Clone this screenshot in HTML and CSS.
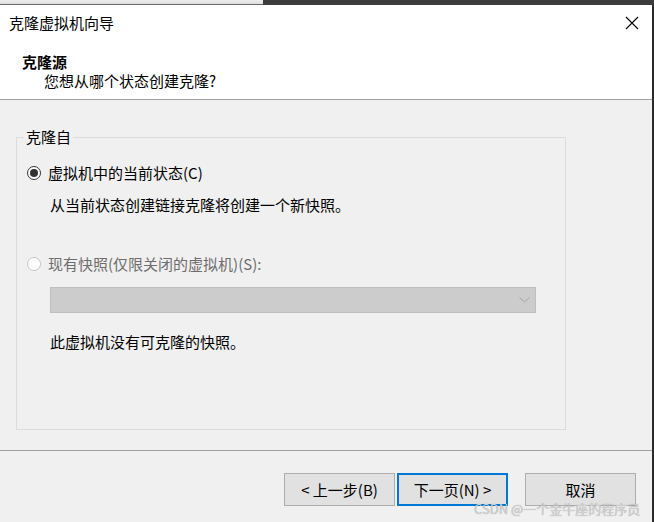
FILE: index.html
```html
<!DOCTYPE html>
<html lang="zh-CN">
<head>
<meta charset="utf-8">
<title>克隆虚拟机向导</title>
<link rel="stylesheet" href="styles.css">
</head>
<body>
<div class="topbar"><div class="topbar-left"></div><div class="topbar-right"></div></div>
<div class="window">
  <div class="header">
    <div class="titlerow">
      <span class="title">克隆虚拟机向导</span>
      <svg class="close" width="14" height="14" viewBox="0 0 14 14"><path d="M1 1 L13 13 M13 1 L1 13" stroke="#000" stroke-width="1.1" fill="none"/></svg>
    </div>
    <div class="heading">克隆源</div>
    <div class="subheading">您想从哪个状态创建克隆?</div>
  </div>
  <div class="body">
    <div class="group">
      <span class="legend">克隆自</span>
      <div class="row first">
        <span class="radio checked"><span class="dot"></span></span>
        <span class="label">虚拟机中的当前状态(C)</span>
      </div>
      <div class="desc">从当前状态创建链接克隆将创建一个新快照。</div>
      <div class="row second disabled">
        <span class="radio"></span>
        <span class="label">现有快照(仅限关闭的虚拟机)(S):</span>
      </div>
      <div class="combo">
        <svg class="chev" width="11" height="6" viewBox="0 0 11 6"><path d="M0.5 0.5 L5.5 5 L10.5 0.5" stroke="#a6a6a6" stroke-width="1" fill="none"/></svg>
      </div>
      <div class="desc note">此虚拟机没有可克隆的快照。</div>
    </div>
  </div>
  <div class="footer">
    <button class="btn">&lt; 上一步(B)</button>
    <button class="btn primary">下一页(N) &gt;</button>
    <button class="btn cancel">取消</button>
    <span class="watermark">CSDN @一个金牛座的程序员</span>
  </div>
</div>
</body>
</html>
```
FILE: styles.css
```css
html, body {
  margin: 0;
  padding: 0;
}
body {
  width: 654px;
  height: 522px;
  overflow: hidden;
  background: #f0f0f0;
  font-family: "Noto Sans CJK SC", "Microsoft YaHei", sans-serif;
  font-size: 15px;
  color: #000;
}
.topbar {
  display: flex;
  height: 5px;
}
.topbar-left {
  width: 263px;
  box-sizing: border-box;
  background: linear-gradient(#ececec, #dedede);
  border-bottom: 1px solid #6a6a6a;
}
.topbar-right {
  flex: 1;
  background: #3c3c3c;
}
.window {
  box-sizing: border-box;
  width: 654px;
  height: 517px;
  border-right: 2px solid #2b2b2b;
  position: relative;
}
.header {
  background: #fff;
  height: 94px;
  border-bottom: 1px solid #a0a0a0;
}
.titlerow {
  height: 36px;
  display: flex;
  align-items: center;
  justify-content: space-between;
  padding: 0 13px 0 9px;
}
.title {
  line-height: 20px;
}
.close {
  display: block;
}
.heading {
  font-weight: bold;
  line-height: 19px;
  padding: 11px 0 0 22px;
}
.subheading {
  line-height: 19px;
  padding-left: 44px;
}
.body {
  height: 350px;
  box-sizing: border-box;
  padding: 37px 0 0 16px;
}
.group {
  position: relative;
  box-sizing: border-box;
  width: 550px;
  height: 293px;
  border: 1px solid #dcdcdc;
  padding: 25px 0 0 10px;
}
.legend {
  position: absolute;
  left: 7px;
  top: -11px;
  padding: 0 2px;
  background: #f0f0f0;
  line-height: 20px;
}
.row {
  display: flex;
  align-items: center;
  height: 20px;
}
.row.second {
  margin-top: 39px;
}
.radio {
  box-sizing: border-box;
  width: 14px;
  height: 14px;
  border-radius: 50%;
  border: 1px solid #c4c4c4;
  background: #fff;
  display: flex;
  align-items: center;
  justify-content: center;
  margin-right: 7px;
}
.radio.checked {
  border: 1.5px solid #333;
}
.dot {
  width: 8px;
  height: 8px;
  border-radius: 50%;
  background: #333;
}
.label {
  line-height: 20px;
}
.disabled .label {
  color: #6d6d6d;
}
.desc {
  line-height: 20px;
  margin-top: 12px;
  padding-left: 23px;
}
.combo {
  box-sizing: border-box;
  margin: 13px 0 0 23px;
  width: 486px;
  height: 26px;
  background: #cccccc;
  border: 1px solid #bfbfbf;
  display: flex;
  align-items: center;
  justify-content: flex-end;
  padding-right: 5px;
}
.chev {
  display: block;
}
.desc.note {
  margin-top: 19px;
}
.footer {
  border-top: 1px solid #a0a0a0;
  display: flex;
  padding: 22px 0 0 284px;
  position: relative;
  height: 66px;
  box-sizing: border-box;
}
.btn {
  box-sizing: border-box;
  width: 111px;
  height: 33px;
  background: #e1e1e1;
  border: 1px solid #adadad;
  font-family: inherit;
  font-size: 15px;
  color: #000;
  padding: 0;
  margin: 0;
  line-height: 20px;
}
.btn.primary {
  border: 2px solid #0078d7;
  margin-left: 2px;
}
.btn.cancel {
  margin-left: 17px;
}
.watermark {
  position: absolute;
  left: 474px;
  top: 50px;
  font-size: 13px;
  line-height: 15px;
  color: #cfcfcf;
  text-shadow: 0 0 1px rgba(0, 0, 0, 0.3);
  white-space: nowrap;
}
```
